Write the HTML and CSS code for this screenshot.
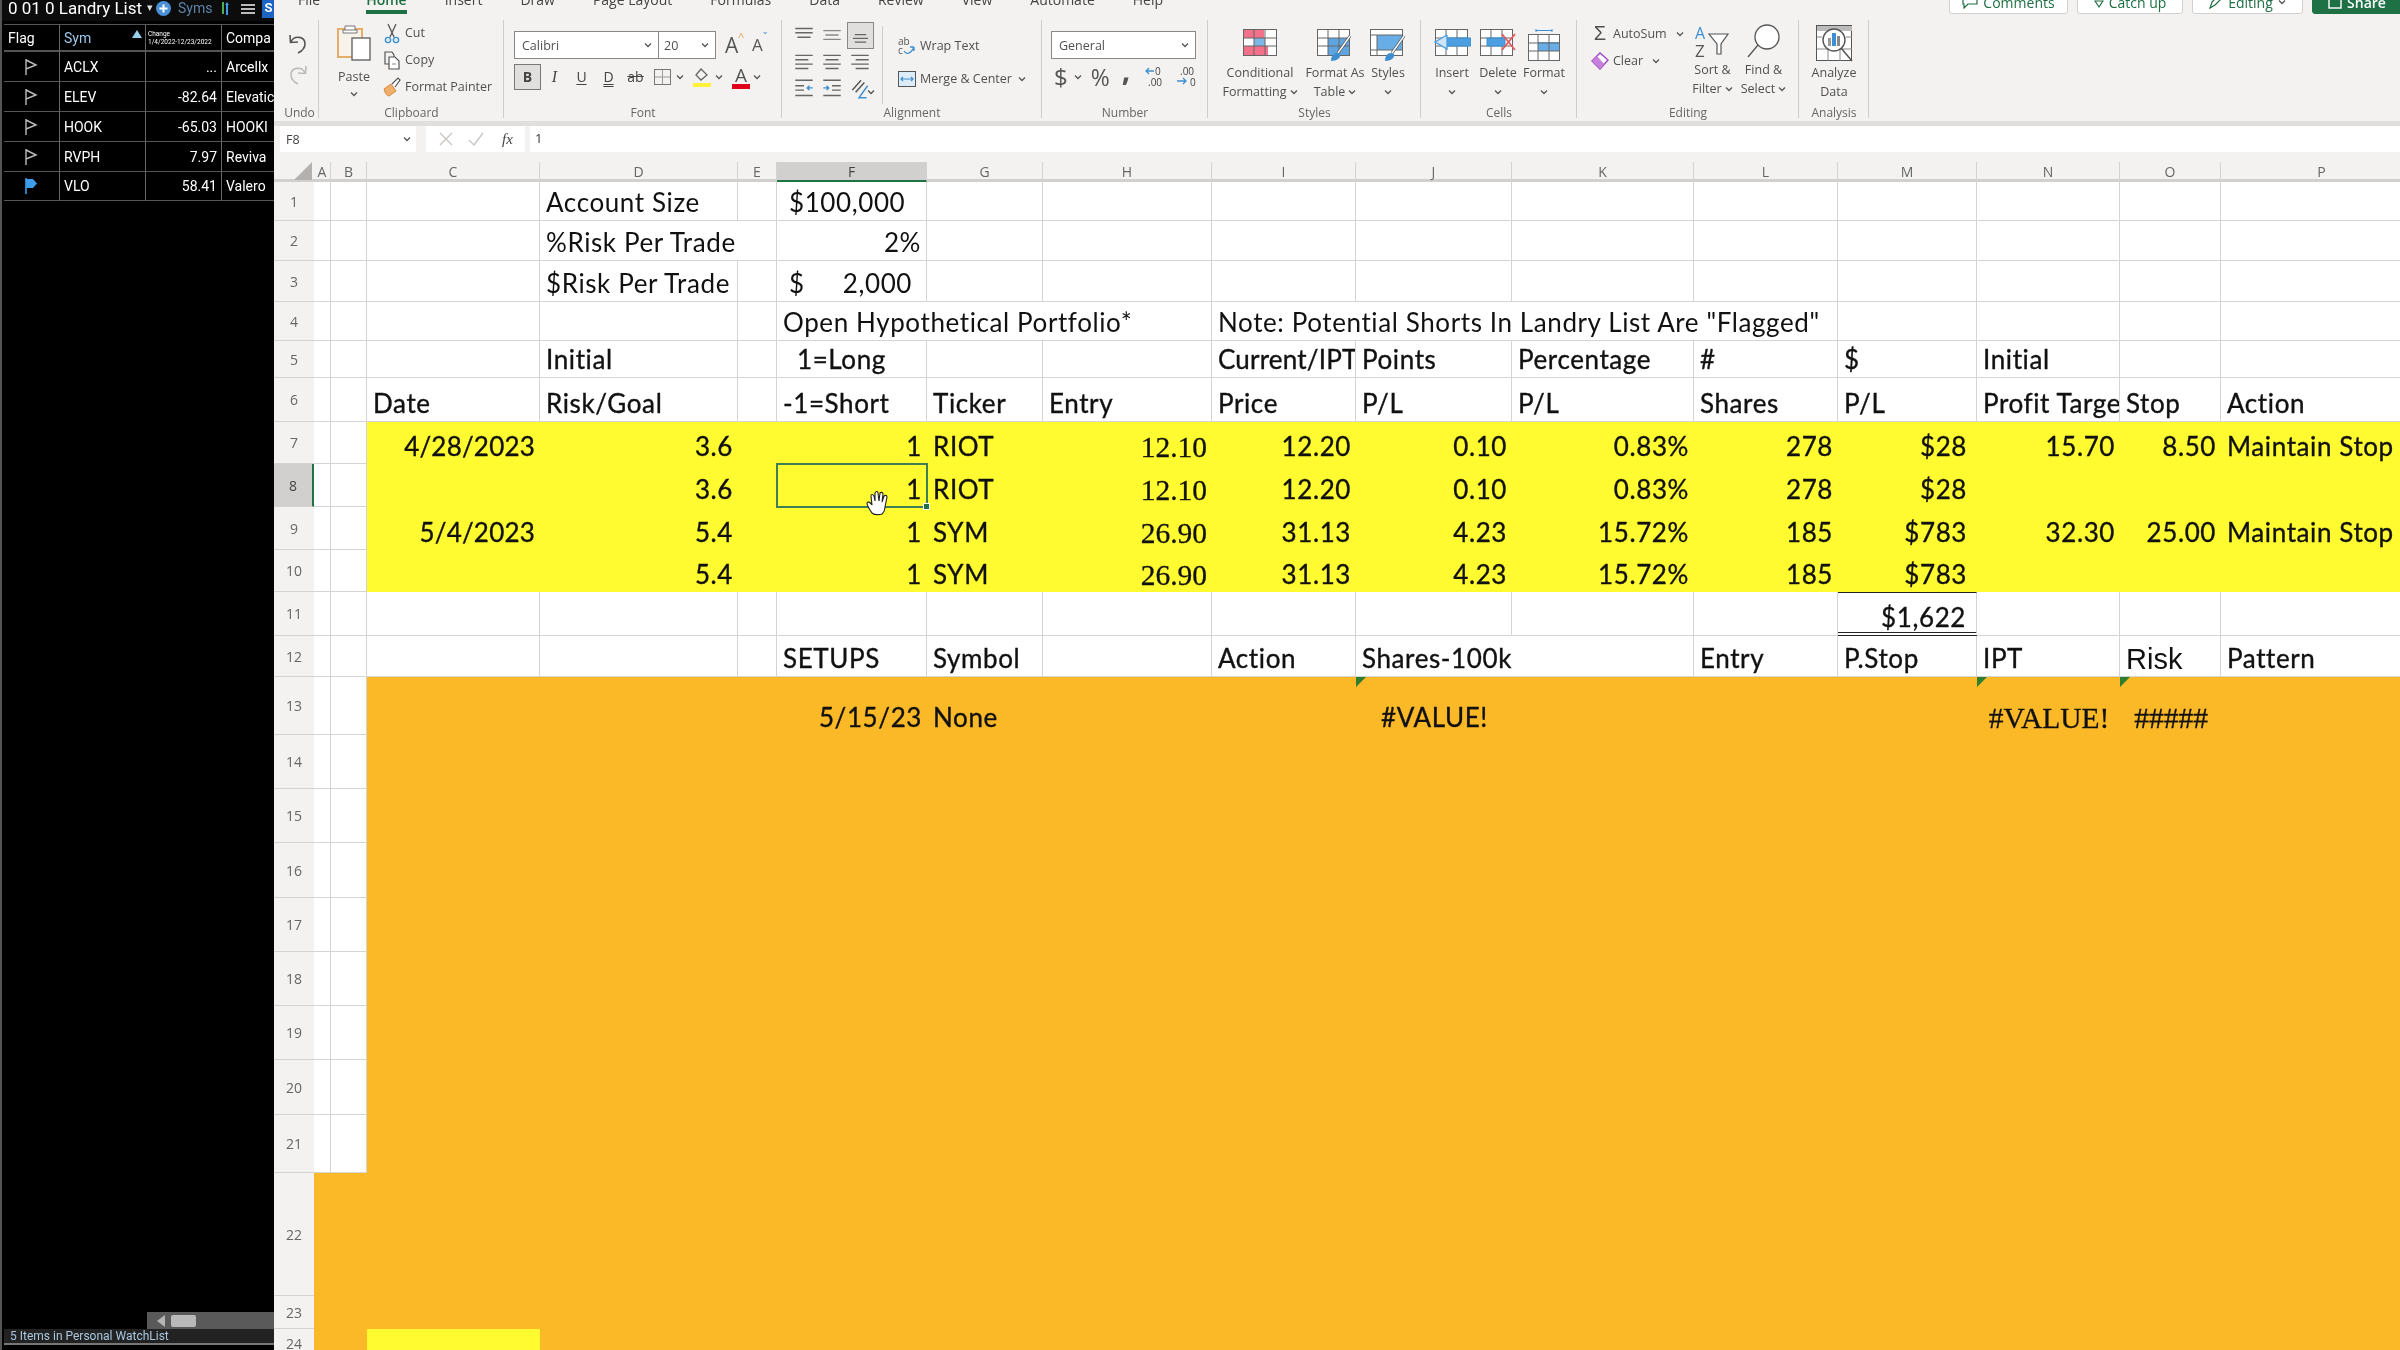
FILE: index.html
```html
<!DOCTYPE html>
<html lang="en">
<head>
<meta charset="utf-8">
<title>Landry List - Excel</title>
<link rel="stylesheet" href="styles.css">
</head>
<body>
<svg class="defs" width="0" height="0">
  <symbol id="chev" viewBox="0 0 8 6"><path d="M1 1.5 4 4.5 7 1.5" fill="none" stroke="#555" stroke-width="1.3"/></symbol>
  <symbol id="flag" viewBox="0 0 14 18"><path d="M2 1V17M2 2 12 7 2 11" fill="none" stroke="#bbb" stroke-width="1.4"/></symbol>
  <symbol id="flagon" viewBox="0 0 14 18"><path d="M2 1V17" stroke="#3d9be9" stroke-width="1.6"/><path d="M2 2H9L13 6.5 9 11H2Z" fill="#3d9be9"/></symbol>
</svg>
<div class="app">
  <aside class="side">
    <div class="side-top">
      <span class="side-title">0 01 0 Landry List</span><span class="side-caret">▾</span>
      <svg class="side-plus" width="15" height="15" viewBox="0 0 15 15"><circle cx="7.5" cy="7.5" r="7.5" fill="#4a90d9"/><path d="M7.5 3.5V11.5M3.5 7.5H11.5" stroke="#fff" stroke-width="2"/></svg>
      <span class="side-syms">Syms</span>
      <svg class="side-arrows" width="10" height="15" viewBox="0 0 10 15"><path d="M3 1V13" stroke="#4caf50" stroke-width="2"/><path d="M7 14V3" stroke="#3d9be9" stroke-width="2"/><path d="M5 4 7 1 9 4Z" fill="#3d9be9"/></svg>
      <svg class="side-menu" width="14" height="12" viewBox="0 0 14 12"><path d="M0 2H14M0 6H14M0 10H14" stroke="#bbb" stroke-width="2"/></svg>
      <span class="side-s">S</span>
    </div>
    <div class="wl">
      <div class="wl-h">Flag</div>
      <div class="wl-h wl-sym">Sym<span class="wl-sort"></span></div>
      <div class="wl-h wl-chg">Change<br>1/4/2022-12/23/2022</div>
      <div class="wl-h wl-cut">Compa</div>

      <div class="wl-c wl-f"><svg class="flag"><use href="#flag"/></svg></div><div class="wl-c">ACLX</div><div class="wl-c wl-n">...</div><div class="wl-c wl-cut">Arcellx</div>
      <div class="wl-c wl-f"><svg class="flag"><use href="#flag"/></svg></div><div class="wl-c">ELEV</div><div class="wl-c wl-n">-82.64</div><div class="wl-c wl-cut">Elevatic</div>
      <div class="wl-c wl-f"><svg class="flag"><use href="#flag"/></svg></div><div class="wl-c">HOOK</div><div class="wl-c wl-n">-65.03</div><div class="wl-c wl-cut">HOOKI</div>
      <div class="wl-c wl-f"><svg class="flag"><use href="#flag"/></svg></div><div class="wl-c">RVPH</div><div class="wl-c wl-n">7.97</div><div class="wl-c wl-cut">Reviva</div>
      <div class="wl-c wl-f"><svg class="flag"><use href="#flagon"/></svg></div><div class="wl-c">VLO</div><div class="wl-c wl-n">58.41</div><div class="wl-c wl-cut">Valero</div>
    </div>
    <div class="side-fill"></div>
    <div class="side-scroll"><span class="sc-arrow"></span><span class="sc-thumb"></span></div>
    <div class="side-status">5 Items in Personal WatchList</div>
    <div class="side-tabs"></div>
  </aside>

  <main class="main">
    <div class="tabs">
      <span class="tab t-file">File</span><span class="tab on">Home</span><span class="tab">Insert</span><span class="tab">Draw</span><span class="tab">Page Layout</span><span class="tab">Formulas</span><span class="tab">Data</span><span class="tab">Review</span><span class="tab">View</span><span class="tab">Automate</span><span class="tab">Help</span>
      <div class="acts">
        <span class="act a1"><svg width="16" height="14" viewBox="0 0 16 14"><path d="M1 1H15V9H6L2 13V9H1Z" fill="none" stroke="#1e6e42" stroke-width="1.200"/></svg>Comments</span>
        <span class="act a2"><svg width="10" height="14" viewBox="0 0 10 14"><path d="M1 6H9L5 12Z" fill="none" stroke="#1e6e42" stroke-width="1.200"/></svg>Catch up</span>
        <span class="act a3"><svg width="14" height="14" viewBox="0 0 14 14"><path d="M1 13 3 7 9 1 12 4 6 10Z" fill="none" stroke="#1e6e42" stroke-width="1.200"/></svg>Editing<svg class="chev"><use href="#chev"/></svg></span>
        <span class="act a4"><svg width="14" height="14" viewBox="0 0 14 14"><rect x="1" y="1" width="12" height="12" fill="none" stroke="#fff" stroke-width="1.400"/></svg>Share</span>
      </div>
    </div>

    <div class="ribbon">
      <section class="grp g-undo">
        <div class="gb col-c">
          <svg width="24" height="26" viewBox="0 0 24 26"><path d="M5 12C8 5 19 6 19 14 19 18 16 21 12 23M4 5 4.500 12.500 12 12" fill="none" stroke="#555" stroke-width="1.6"/></svg>
          <svg class="redo" width="24" height="26" viewBox="0 0 24 26"><path d="M19 12C16 5 5 6 5 14 5 18 8 21 12 23M20 5 19.500 12.500 12 12" fill="none" stroke="#bbb" stroke-width="1.6"/></svg>
        </div>
        <div class="gl">Undo</div>
      </section>

      <section class="grp g-clip">
        <div class="gb row-g">
          <div class="paste">
            <svg width="36" height="38" viewBox="0 0 36 38"><rect x="2" y="5" width="24" height="28" fill="#f7f3ea" stroke="#e6ad68" stroke-width="2"/><path d="M9 6V2H19V6M7 6H21V9H7Z" fill="#fff" stroke="#777"/><rect x="16" y="14" width="18" height="22" fill="#fff" stroke="#666" stroke-width="1.4"/></svg>
            <span class="pl">Paste</span>
            <svg class="chev"><use href="#chev"/></svg>
          </div>
          <div class="clist">
            <div class="ci"><svg width="18" height="22" viewBox="0 0 18 22"><path d="M5 2 11 15M13 2 7 15" stroke="#555" stroke-width="1.3"/><circle cx="5" cy="18" r="2.600" fill="none" stroke="#3d8fd1" stroke-width="1.400"/><circle cx="13" cy="18" r="2.600" fill="none" stroke="#3d8fd1" stroke-width="1.400"/></svg>Cut</div>
            <div class="ci"><svg width="18" height="22" viewBox="0 0 18 22"><path d="M9 15H2V3H9L11 6V8" fill="none" stroke="#555" stroke-width="1.200"/><path d="M6 8H12L16 12V20H6Z" fill="#fff" stroke="#555" stroke-width="1.200"/><path d="M9 15H13" stroke="#888"/></svg>Copy</div>
            <div class="ci"><svg width="18" height="22" viewBox="0 0 18 22"><path d="M1 13 8 8 13 15 6 20Q3 20 1 13Z" fill="#f0b06a" stroke="#d98a3a"/><path d="M9 8 15 2 17 4 12 11" fill="#fff" stroke="#555" stroke-width="1.200"/></svg>Format Painter</div>
          </div>
        </div>
        <div class="gl">Clipboard</div>
      </section>

      <section class="grp g-font">
        <div class="gb">
          <div class="f-row">
            <div class="dd dd-name">Calibri<svg class="chev"><use href="#chev"/></svg></div>
            <div class="dd dd-size">20<svg class="chev"><use href="#chev"/></svg></div>
            <span class="fa fa1">A<sup>^</sup></span><span class="fa fa2">A<sup>ˇ</sup></span>
          </div>
          <div class="f-row2">
            <span class="fb fb-b">B</span><span class="fb fb-i">I</span><span class="fb fb-u">U</span><span class="fb fb-d">D</span><span class="fb fb-s">ab</span>
            <svg class="fbi" width="20" height="20" viewBox="0 0 20 20"><rect x="1.500" y="2.500" width="16" height="15" fill="none" stroke="#777"/><path d="M9.500 3V17M2 10H17" stroke="#999"/></svg>
            <svg class="chev"><use href="#chev"/></svg>
            <svg class="fbi f2" width="20" height="22" viewBox="0 0 20 22"><path d="M9 3 15 9 9 14 4 9Z" fill="none" stroke="#666" stroke-width="1.300"/><rect x="1" y="17" width="18" height="4" fill="#fff238"/></svg>
            <svg class="chev"><use href="#chev"/></svg>
            <div class="fcol">A</div>
            <svg class="chev"><use href="#chev"/></svg>
          </div>
        </div>
        <div class="gl">Font</div>
      </section>

      <section class="grp g-align">
        <div class="gb row-a">
          <div class="al">
            <svg class="ab" viewBox="0 0 18 22"><path d="M1 5H17M1 9H17M3 13H15" stroke="#666" stroke-width="1.300"/></svg>
            <svg class="ab" viewBox="0 0 18 22"><path d="M1 7H17M3 11H15M1 15H17" stroke="#888" stroke-width="1.300"/></svg>
            <svg class="ab ab-on" viewBox="0 0 18 22"><path d="M3 10H15M1 14H17M3 18H15" stroke="#666" stroke-width="1.300"/></svg>
            <svg class="ab" viewBox="0 0 18 22"><path d="M1 4H17M1 8H13M1 12H17M1 16H13" stroke="#666" stroke-width="1.300"/></svg>
            <svg class="ab" viewBox="0 0 18 22"><path d="M1 4H17M3 8H15M1 12H17M3 16H15" stroke="#666" stroke-width="1.300"/></svg>
            <svg class="ab" viewBox="0 0 18 22"><path d="M1 4H17M5 8H17M1 12H17M5 16H17" stroke="#666" stroke-width="1.300"/></svg>
            <svg class="ab" viewBox="0 0 18 22"><path d="M1 3H17M1 8H9M1 12H9M1 17H17" stroke="#666" stroke-width="1.300"/><path d="M17 10H12M14 8 12 10 14 12" fill="none" stroke="#3d8fd1" stroke-width="1.300"/></svg>
            <svg class="ab" viewBox="0 0 18 22"><path d="M1 3H17M9 8H17M9 12H17M1 17H17" stroke="#666" stroke-width="1.300"/><path d="M1 10H6M4 8 6 10 4 12" fill="none" stroke="#3d8fd1" stroke-width="1.300"/></svg>
            <svg class="ab" viewBox="0 0 18 22"><path d="M2 12 10 3M5 14 13 5" stroke="#555" stroke-width="1.300"/><path d="M16 8 8 19H15" fill="none" stroke="#3d8fd1" stroke-width="1.300"/></svg>
          </div>
          <svg class="chev a-chev"><use href="#chev"/></svg>
          <div class="wm">
            <div class="wmi"><svg width="18" height="20" viewBox="0 0 18 20"><text x="0" y="9" class="wt">ab</text><text x="0" y="18" class="wt">c</text><path d="M6 15C8 19 13 18 16 11M16 11V15M16 11H12" fill="none" stroke="#3d8fd1" stroke-width="1.300"/></svg>Wrap Text</div>
            <div class="wmi"><svg width="18" height="20" viewBox="0 0 18 20"><rect x=".5" y="2.500" width="17" height="15" fill="#dcecf8" stroke="#555"/><path d="M3 10H15M5 8 3 10 5 12M13 8 15 10 13 12" fill="none" stroke="#3d8fd1" stroke-width="1.200"/></svg>Merge &amp; Center<svg class="chev"><use href="#chev"/></svg></div>
          </div>
        </div>
        <div class="gl">Alignment</div>
      </section>

      <section class="grp g-num">
        <div class="gb">
          <div class="dd dd-gen">General<svg class="chev"><use href="#chev"/></svg></div>
          <div class="n-row">
            <span class="nb nb-d">$</span><svg class="chev"><use href="#chev"/></svg><span class="nb nb-p">%</span><span class="nb nb-c">,</span>
            <svg class="nb-i" width="24" height="24" viewBox="0 0 24 24"><text x="11" y="10" class="nt">0</text><text x="4" y="21" class="nt">.00</text><path d="M10 6H2M5 3 2 6 5 9" fill="none" stroke="#3d8fd1" stroke-width="1.300"/></svg>
            <svg class="nb-i" width="24" height="24" viewBox="0 0 24 24"><text x="4" y="10" class="nt">.00</text><text x="14" y="21" class="nt">0</text><path d="M1 16H10M7 13 10 16 7 19" fill="none" stroke="#3d8fd1" stroke-width="1.300"/></svg>
          </div>
        </div>
        <div class="gl">Number</div>
      </section>

      <section class="grp g-sty">
        <div class="gb row-b">
          <div class="big b-cf">
            <div class="ic"><svg width="34" height="27" viewBox="0 0 34 27"><rect x=".5" y=".5" width="33" height="26" fill="#fff" stroke="#666"/><rect x="1" y="1" width="20" height="8" fill="#f2708a"/><rect x="11" y="9" width="11" height="8" fill="#7db8e8"/><rect x="1" y="17" width="24" height="9" fill="#f2708a"/><path d="M11 1V26M22 1V26M1 9H33M1 17H33" stroke="#666" fill="none"/></svg></div>
            <span>Conditional</span><span>Formatting<svg class="chev"><use href="#chev"/></svg></span>
          </div>
          <div class="big b-ft">
            <div class="ic"><svg width="36" height="33" viewBox="0 0 36 33"><rect x=".5" y=".5" width="32" height="26" fill="#fff" stroke="#666"/><rect x="11" y="9" width="21" height="17" fill="#5fa6e0"/><path d="M11 1V26M22 1V26M1 9H32M1 17H32" stroke="#666" fill="none"/><path d="M33 7 21 24" stroke="#555" stroke-width="3"/><path d="M33 7 21 24" stroke="#fff" stroke-width="1.400"/><path d="M14 32C14 26 18 22 23 25 24 29 20 32 14 32Z" fill="#3d8fd1"/></svg></div>
            <span>Format As</span><span>Table<svg class="chev"><use href="#chev"/></svg></span>
          </div>
          <div class="big b-st">
            <div class="ic"><svg width="36" height="33" viewBox="0 0 36 33"><rect x=".5" y=".5" width="32" height="26" fill="#fff" stroke="#666"/><rect x="7" y="6" width="25" height="15" fill="#68ade6"/><path d="M1 6H32M7 6V26M1 21H32" stroke="#666" fill="none"/><path d="M34 7 22 24" stroke="#555" stroke-width="3"/><path d="M34 7 22 24" stroke="#fff" stroke-width="1.400"/><path d="M15 32C15 26 19 22 24 25 25 29 21 32 15 32Z" fill="#3d8fd1"/></svg></div>
            <span>Styles</span><span><svg class="chev"><use href="#chev"/></svg></span>
          </div>
        </div>
        <div class="gl">Styles</div>
      </section>

      <section class="grp g-cell">
        <div class="gb row-b">
          <div class="big b-c">
            <div class="ic"><svg width="38" height="27" viewBox="0 0 38 27"><rect x="2.500" y=".5" width="32" height="26" fill="#fff" stroke="#666"/><path d="M13 1V26M24 1V26M3 9H34M3 17H34" stroke="#666" fill="none"/><rect x="10" y="9" width="28" height="8" fill="#4b9fe0" stroke="#3d8fd1"/><path d="M14 6 2 13 14 20V6" fill="#cfe4f5" stroke="#4b9fe0" stroke-width="1.400"/></svg></div>
            <span>Insert</span><span><svg class="chev"><use href="#chev"/></svg></span>
          </div>
          <div class="big b-c">
            <div class="ic"><svg width="36" height="27" viewBox="0 0 36 27"><rect x=".5" y=".5" width="32" height="26" fill="#fff" stroke="#666"/><path d="M11 1V26M22 1V26M1 9H32M1 17H32" stroke="#666" fill="none"/><rect x="7" y="9" width="18" height="8" fill="#4b9fe0" stroke="#3d8fd1"/><path d="M22 5 35 21M35 5 22 21" stroke="#e8595c" stroke-width="1.800"/></svg></div>
            <span>Delete</span><span><svg class="chev"><use href="#chev"/></svg></span>
          </div>
          <div class="big b-c">
            <div class="ic"><svg width="32" height="32" viewBox="0 0 32 32"><path d="M8 1.500H24M8 0V3M24 0V3" stroke="#3d8fd1"/><rect x=".5" y="5.500" width="31" height="26" fill="#fff" stroke="#666"/><rect x="10" y="13" width="21" height="9" fill="#68ade6"/><path d="M10 6V31M21 6V31M1 14H31M1 22H31" stroke="#666" fill="none"/></svg></div>
            <span>Format</span><span><svg class="chev"><use href="#chev"/></svg></span>
          </div>
        </div>
        <div class="gl">Cells</div>
      </section>

      <section class="grp g-edit">
        <div class="gb row-e">
          <div class="elist">
            <div class="ci"><span class="sigma">Σ</span>AutoSum<svg class="chev"><use href="#chev"/></svg></div>
            <div class="ci"><svg width="18" height="18" viewBox="0 0 18 18"><path d="M1 9 9 1 17 8 9 17Z" fill="#fff" stroke="#a24ac4" stroke-width="1.500"/><path d="M1 9 6 4 13 12 9 17Z" fill="#c77fdc"/></svg>Clear<svg class="chev"><use href="#chev"/></svg></div>
          </div>
          <div class="big b-s">
            <div class="ic ic2"><svg width="36" height="34" viewBox="0 0 36 34"><text x="0" y="15" class="az-a">A</text><text x="0" y="33" class="az-z">Z</text><path d="M14 10H33L26 20V30H22V20Z" fill="#fff" stroke="#555" stroke-width="1.200"/></svg></div>
            <span>Sort &amp;</span><span>Filter<svg class="chev"><use href="#chev"/></svg></span>
          </div>
          <div class="big b-s">
            <div class="ic ic2"><svg width="34" height="34" viewBox="0 0 34 34"><circle cx="20" cy="13" r="12" fill="#fff" stroke="#555" stroke-width="1.300"/><path d="M11 21 1 33" stroke="#555" stroke-width="1.300"/></svg></div>
            <span>Find &amp;</span><span>Select<svg class="chev"><use href="#chev"/></svg></span>
          </div>
        </div>
        <div class="gl">Editing</div>
      </section>

      <section class="grp g-an">
        <div class="gb row-b">
          <div class="big b-an">
            <div class="ic"><svg width="37" height="37" viewBox="0 0 37 37"><rect x=".5" y=".5" width="35" height="35" fill="#fff" stroke="#555"/><rect x="1" y="1" width="35" height="5" fill="#bbb"/><path d="M1 24H36M12 24V36M24 24V36M1 12H6M30 12H36" stroke="#888"/><circle cx="18" cy="15" r="11" fill="#fff" stroke="#555" stroke-width="1.400"/><rect x="12" y="13" width="3" height="8" fill="#999"/><rect x="16" y="8" width="4" height="13" fill="#3d8fd1"/><rect x="21" y="11" width="3" height="10" fill="#888"/><path d="M25 23 36 36" stroke="#555" stroke-width="1.500"/></svg></div>
            <span>Analyze</span><span>Data</span>
          </div>
        </div>
        <div class="gl">Analysis</div>
      </section>
    </div>

    <div class="fbar">
      <div class="nbox">F8<svg class="chev"><use href="#chev"/></svg></div>
      <div class="fbtns">
        <svg width="16" height="16" viewBox="0 0 16 16"><path d="M2 2 14 14M14 2 2 14" stroke="#c8c6c4" stroke-width="1.400"/></svg>
        <svg width="16" height="16" viewBox="0 0 16 16"><path d="M1 9 6 14 15 2" fill="none" stroke="#c8c6c4" stroke-width="1.400"/></svg>
        <span class="fx">fx</span>
      </div>
      <div class="finput">1</div>
    </div>

    <div class="sheet">
      <div class="ch corner"><svg width="18" height="18" viewBox="0 0 18 18"><path d="M18 0V18H0Z" fill="#b3b0ad"/></svg></div>
      <div class="ch">A</div><div class="ch">B</div><div class="ch">C</div><div class="ch">D</div><div class="ch">E</div><div class="ch ch-on">F</div><div class="ch">G</div><div class="ch">H</div><div class="ch">I</div><div class="ch">J</div><div class="ch">K</div><div class="ch">L</div><div class="ch">M</div><div class="ch">N</div><div class="ch">O</div><div class="ch">P</div>

      <div class="rh">1</div><div class="c"></div><div class="c"></div><div class="c"></div><div class="c">Account Size</div><div class="c"></div><div class="c ind">$100,000</div><div class="c"></div><div class="c"></div><div class="c"></div><div class="c"></div><div class="c"></div><div class="c"></div><div class="c"></div><div class="c"></div><div class="c"></div><div class="c"></div>

      <div class="rh">2</div><div class="c"></div><div class="c"></div><div class="c"></div><div class="c s2">%Risk Per Trade</div><div class="c r">2%</div><div class="c"></div><div class="c"></div><div class="c"></div><div class="c"></div><div class="c"></div><div class="c"></div><div class="c"></div><div class="c"></div><div class="c"></div><div class="c"></div>

      <div class="rh">3</div><div class="c"></div><div class="c"></div><div class="c"></div><div class="c">$Risk Per Trade</div><div class="c"></div><div class="c acc"><span>$</span><span>2,000</span></div><div class="c"></div><div class="c"></div><div class="c"></div><div class="c"></div><div class="c"></div><div class="c"></div><div class="c"></div><div class="c"></div><div class="c"></div><div class="c"></div>

      <div class="rh">4</div><div class="c"></div><div class="c"></div><div class="c"></div><div class="c"></div><div class="c"></div><div class="c s3">Open Hypothetical Portfolio*</div><div class="c s4">Note: Potential Shorts In Landry List Are "Flagged"</div><div class="c"></div><div class="c"></div><div class="c"></div><div class="c"></div>

      <div class="rh">5</div><div class="c"></div><div class="c"></div><div class="c"></div><div class="c hv">Initial</div><div class="c"></div><div class="c hv ind2">1=Long</div><div class="c"></div><div class="c"></div><div class="c hv clip cur">Current/IPT</div><div class="c hv">Points</div><div class="c hv">Percentage</div><div class="c hv">#</div><div class="c hv">$</div><div class="c hv">Initial</div><div class="c"></div><div class="c"></div>

      <div class="rh">6</div><div class="c"></div><div class="c"></div><div class="c hv">Date</div><div class="c hv">Risk/Goal</div><div class="c"></div><div class="c hv">-1=Short</div><div class="c hv">Ticker</div><div class="c hv">Entry</div><div class="c hv">Price</div><div class="c hv">P/L</div><div class="c hv">P/L</div><div class="c hv">Shares</div><div class="c hv">P/L</div><div class="c hv clip">Profit Target</div><div class="c hv">Stop</div><div class="c hv">Action</div>

      <div class="rh">7</div><div class="c"></div><div class="c"></div><div class="y r dt">4/28/2023</div><div class="y r">3.6</div><div class="y"></div><div class="y r">1</div><div class="y">RIOT</div><div class="y r se">12.10</div><div class="y r">12.20</div><div class="y r">0.10</div><div class="y r">0.83%</div><div class="y r">278</div><div class="y r m">$28</div><div class="y r">15.70</div><div class="y r">8.50</div><div class="y">Maintain Stop</div>

      <div class="rh rh-on">8</div><div class="c"></div><div class="c"></div><div class="y"></div><div class="y r">3.6</div><div class="y"></div><div class="y r sel">1<span class="hand"><svg width="26" height="26" viewBox="0 0 26 26"><path d="M7 23C5 20 2 16 2 13 3 11 5 12 7 15L6 6C6 4 8 4 9 6L10 11 10 3C11 1 13 1 13 3L14 11 15 3C16 2 18 2 18 4L17 12 19 6C20 5 22 5 22 7L20 17C20 20 19 22 17 24 14 25 9 25 7 23Z" fill="#fff" stroke="#222" stroke-width="1.100"/></svg></span></div><div class="y">RIOT</div><div class="y r se">12.10</div><div class="y r">12.20</div><div class="y r">0.10</div><div class="y r">0.83%</div><div class="y r">278</div><div class="y r m">$28</div><div class="y"></div><div class="y"></div><div class="y"></div>

      <div class="rh">9</div><div class="c"></div><div class="c"></div><div class="y r dt">5/4/2023</div><div class="y r">5.4</div><div class="y"></div><div class="y r">1</div><div class="y">SYM</div><div class="y r se">26.90</div><div class="y r">31.13</div><div class="y r">4.23</div><div class="y r">15.72%</div><div class="y r">185</div><div class="y r m">$783</div><div class="y r">32.30</div><div class="y r">25.00</div><div class="y">Maintain Stop</div>

      <div class="rh">10</div><div class="c"></div><div class="c"></div><div class="y"></div><div class="y r">5.4</div><div class="y"></div><div class="y r">1</div><div class="y">SYM</div><div class="y r se">26.90</div><div class="y r">31.13</div><div class="y r">4.23</div><div class="y r">15.72%</div><div class="y r">185</div><div class="y r m">$783</div><div class="y"></div><div class="y"></div><div class="y"></div>

      <div class="rh">11</div><div class="c"></div><div class="c"></div><div class="c"></div><div class="c"></div><div class="c"></div><div class="c"></div><div class="c"></div><div class="c"></div><div class="c"></div><div class="c"></div><div class="c"></div><div class="c"></div><div class="c r hv m tot">$1,622</div><div class="c"></div><div class="c"></div><div class="c"></div>

      <div class="rh">12</div><div class="c"></div><div class="c"></div><div class="c"></div><div class="c"></div><div class="c"></div><div class="c hv">SETUPS</div><div class="c hv">Symbol</div><div class="c"></div><div class="c hv">Action</div><div class="c hv s2">Shares-100k</div><div class="c hv">Entry</div><div class="c hv">P.Stop</div><div class="c hv">IPT</div><div class="c ar">Risk</div><div class="c hv">Pattern</div>

      <div class="rh">13</div><div class="c"></div><div class="c"></div><div class="o s3"></div><div class="o r hv">5/15/23</div><div class="o hv">None</div><div class="o s2"></div><div class="o ctr hv tri">#VALUE!</div><div class="o s3"></div><div class="o ctr se se2 tri">#VALUE!</div><div class="o ctr se se2 tri">#####</div><div class="o"></div>

      <div class="rh">14</div><div class="c"></div><div class="c"></div><div class="o s14"></div>
      <div class="rh">15</div><div class="c"></div><div class="c"></div><div class="o s14"></div>
      <div class="rh">16</div><div class="c"></div><div class="c"></div><div class="o s14"></div>
      <div class="rh">17</div><div class="c"></div><div class="c"></div><div class="o s14"></div>
      <div class="rh">18</div><div class="c"></div><div class="c"></div><div class="o s14"></div>
      <div class="rh">19</div><div class="c"></div><div class="c"></div><div class="o s14"></div>
      <div class="rh">20</div><div class="c"></div><div class="c"></div><div class="o s14"></div>
      <div class="rh">21</div><div class="c"></div><div class="c"></div><div class="o s14"></div>
      <div class="rh">22</div><div class="o s16"></div>
      <div class="rh">23</div><div class="o s16"></div>
      <div class="rh">24</div><div class="o s2"></div><div class="y"></div><div class="o s13"></div>
    </div>
  </main>
</div>
</body>
</html>
```

FILE: styles.css
```css
* { box-sizing: border-box; }
html, body { margin: 0; padding: 0; background: #fff; }
body { width: 2400px; height: 1350px; overflow: hidden; font-family: "Open Sans", "Liberation Sans", sans-serif; }
.defs { display: block; height: 0; }
.app { display: flex; width: 2400px; height: 1350px; overflow: hidden; filter: blur(.4px); }

/* watch list */
.side { width: 274px; flex: none; background: #000; color: #eee; display: flex; flex-direction: column; border-left: 2px solid #555; font-family: Roboto, "Liberation Sans", sans-serif; }
.side-top { height: 21px; display: flex; align-items: flex-start; padding: 0 0 0 6px; background: #0c0c0c; overflow: hidden; }
.side-title { font-size: 17px; line-height: 17px; white-space: nowrap; color: #fff; }
.side-caret { font-size: 11px; line-height: 16px; margin-left: 5px; color: #ddd; }
.side-plus { margin: 1px 0 0 3px; flex: none; }
.side-syms { font-size: 14px; line-height: 16px; color: #5f83a8; margin-left: 7px; }
.side-arrows { margin: 1px 0 0 7px; flex: none; }
.side-menu { margin: 3px 0 0 11px; flex: none; }
.side-s { margin-left: 7px; width: 14px; height: 18px; background: #1d63c4; color: #fff; font-size: 13px; font-weight: 700; text-align: center; line-height: 16px; flex: none; }
.wl { margin: 3px 0 0 2px; display: grid; grid-template-columns: 56px 86px 76px 52px; grid-template-rows: 27px repeat(5, 30px); }
.wl-h, .wl-c { border-top: 1px solid #555; border-right: 1px solid #666; display: flex; align-items: center; padding: 0 4px; font-size: 14px; color: #fff; white-space: nowrap; overflow: hidden; }
.wl-c:nth-child(4n+4), .wl-h:nth-child(4) { border-right: 0; padding-right: 0; }
.wl-c:nth-last-child(-n+4) { border-bottom: 1px solid #555; }
.wl-h { border-bottom: 1px solid #555; position: relative; }
.wl-sym { color: #9cc7ea; }
.wl-sort { position: absolute; right: 3px; top: 5px; width: 0; height: 0; border-left: 5px solid transparent; border-right: 5px solid transparent; border-bottom: 8px solid #9bcdec; }
.wl-chg { display: block; font-size: 6.500px; line-height: 8px; padding: 5px 0 0 2px; }
.wl-n { justify-content: flex-end; }
.wl-f { justify-content: center; padding-right: 6px; }
.flag { width: 14px; height: 18px; }
.side-fill { flex: 1; }
.side-scroll { height: 17px; margin-left: 145px; background: #5a5a5a; display: flex; align-items: center; padding-left: 10px; gap: 6px; }
.sc-arrow { width: 0; height: 0; border-top: 6px solid transparent; border-bottom: 6px solid transparent; border-right: 8px solid #b5b5b5; }
.sc-thumb { width: 25px; height: 12px; background: #b9b9b9; border-radius: 2px; }
.side-status { height: 14px; margin-left: 2px; background: #222; color: #a9c7de; font-size: 12px; line-height: 14px; padding-left: 6px; white-space: nowrap; }
.side-tabs { height: 7px; margin-left: 2px; background: #000; border-top: 2px solid #777; }

/* main column */
.main { flex: 1; min-width: 0; display: flex; flex-direction: column; background: #f3f2f1; }
.tabs { height: 14px; flex: none; display: flex; gap: 38px; padding-left: 24px; overflow: hidden; font-size: 14px; color: #444; }
.tab { position: relative; height: 21px; margin-top: -7px; line-height: 14px; white-space: nowrap; }
.t-file { margin-right: 8px; }
.tab.on { color: #1e6e42; font-weight: 600; }
.tab.on::after { content: ""; position: absolute; left: 0; right: 0; bottom: 0; height: 4px; background: #1e7145; }
.acts { margin-left: auto; display: flex; gap: 9px; }
.act { height: 24px; margin-top: -10px; background: #fff; border: 1px solid #d2d0ce; border-radius: 3px; display: flex; justify-content: center; align-items: center; gap: 5px; color: #1e6e42; font-size: 14px; }
.a1 { width: 119px; }
.a2 { width: 106px; }
.a3 { width: 111px; }
.a4 { width: 100px; margin-right: -12px; background: #1e7145; color: #fff; font-weight: 600; border-color: #1e7145; padding-right: 10px; }

/* ribbon */
.ribbon { height: 107px; flex: none; display: flex; padding: 0 0 0 6px; font-size: 12.500px; color: #505050; }
.grp { position: relative; display: flex; flex-direction: column; height: 107px; padding-top: 6px; }
.grp::after { content: ""; position: absolute; right: 0; top: 6px; bottom: 3px; width: 1px; background: #cfcdcb; }
.gb { height: 84px; }
.gl { height: 17px; line-height: 17px; text-align: center; font-size: 12px; color: #666; white-space: nowrap; }
.g-undo { width: 39px; }
.g-clip { width: 185px; }
.g-font { width: 278px; }
.g-align { width: 260px; }
.g-num { width: 166px; }
.g-sty { width: 213px; }
.g-cell { width: 156px; }
.g-edit { width: 222px; }
.g-an { width: 70px; }
.chev { width: 8px; height: 6px; flex: none; }

.col-c { display: flex; flex-direction: column; align-items: center; gap: 5px; padding: 10px 4px 0 0; }
.row-g { display: flex; padding: 4px 0 0 17px; gap: 11px; }
.paste { width: 36px; display: flex; flex-direction: column; align-items: center; }
.pl { line-height: 19px; margin-top: 5px; white-space: nowrap; }
.paste .chev { margin-top: 5px; }
.clist { display: flex; flex-direction: column; gap: 4px; margin-top: -3px; }
.ci { height: 23px; display: flex; align-items: center; gap: 4px; white-space: nowrap; }
.ci .chev { margin-left: 5px; }

.f-row { display: flex; align-items: center; padding: 11px 0 0 10px; }
.dd { height: 28px; background: #fff; border: 1px solid #8a8886; display: flex; align-items: center; justify-content: space-between; padding: 0 6px 0 7px; }
.dd-name { width: 145px; }
.dd-size { width: 58px; margin-left: -1px; padding-left: 5px; }
.fa { font-size: 21px; line-height: 28px; color: #555; position: relative; }
.fa sup { font-size: 11px; position: absolute; top: -4px; left: 13px; line-height: 20px; color: #e0a050; }
.fa1 { margin-left: 9px; width: 27px; }
.fa2 { font-size: 17px; width: 20px; }
.fa2 sup { color: #4a90d9; left: 11px; }
.f-row2 { display: flex; align-items: center; padding: 5px 0 0 10px; height: 31px; }
.fb { width: 27px; text-align: center; font-size: 14px; color: #444; line-height: 26px; flex: none; }
.fb-b { background: #e1dfdd; border: 1px solid #7a7876; font-weight: 700; line-height: 24px; height: 26px; }
.fb-i { font-style: italic; font-family: "Liberation Serif", serif; font-size: 16px; }
.fb-u { text-decoration: underline; text-underline-offset: 2px; }
.fb-d { text-decoration: underline double; text-underline-offset: 2px; }
.fb-s { text-decoration: line-through; }
.fbi { margin-left: 4px; flex: none; }
.f-row2 > .chev { margin-left: 3px; }
.f2 { margin-left: 8px; }
.fcol { width: 18px; height: 23px; margin-left: 9px; font-size: 19px; line-height: 19px; text-align: center; color: #555; border-bottom: 5px solid #e0001b; flex: none; }

.row-a { display: flex; padding: 1px 0 0 8px; }
.al { display: grid; grid-template-columns: repeat(3, 28px); grid-template-rows: 28px 27px 26px; justify-items: center; align-items: center; width: 84px; }
.ab { width: 20px; height: 24px; }
.ab-on { width: 27px; height: 27px; padding: 1px 4px; background: #e1dfdd; border: 1px solid #8a8886; }
.a-chev { align-self: flex-end; margin: 0 0 9px -7px; }
.wm { margin-left: 7px; padding: 8px 0 0 15px; border-left: 1px solid #cfcdcb; height: 78px; margin-top: 5px; display: flex; flex-direction: column; gap: 10px; }
.wmi { display: flex; align-items: center; gap: 4px; height: 23px; white-space: nowrap; }
.wmi .chev { margin-left: 2px; }
.wt { font: 10px "Open Sans", sans-serif; fill: #555; }

.dd-gen { width: 145px; margin: 11px 0 0 9px; justify-content: space-between; }
.n-row { display: flex; align-items: center; gap: 6px; padding: 4px 0 0 12px; height: 32px; }
.nb { color: #555; flex: none; }
.nb-d { font-size: 24px; line-height: 28px; }
.nb-p { font-size: 23px; line-height: 28px; margin-left: 3px; }
.nb-c { font-size: 30px; font-weight: 700; line-height: 14px; margin-left: 6px; width: 14px; height: 28px; }
.nb-i { flex: none; margin-left: 2px; }
.nt { font: 10px "Open Sans", sans-serif; fill: #444; }

.row-b { display: flex; padding: 4px 0 0 0; }
.big { display: flex; flex-direction: column; align-items: center; white-space: nowrap; }
.big > span { height: 19px; line-height: 19px; display: flex; align-items: center; gap: 3px; }
.ic { height: 39px; display: flex; align-items: flex-start; padding-top: 5px; }
.ic2 { height: 36px; padding-top: 0; }
.g-sty .row-b { padding-left: 10px; }
.b-cf { width: 84px; }
.b-ft { width: 66px; }
.b-st { width: 40px; }
.g-cell .row-b { padding-left: 8px; }
.b-c { width: 46px; }
.row-e { display: flex; padding: 4px 0 0 14px; }
.elist { width: 96px; display: flex; flex-direction: column; gap: 4px; margin-top: -2px; }
.sigma { font-size: 20px; width: 18px; text-align: center; font-family: "Liberation Sans", sans-serif; }
.b-s { width: 51px; }
.az-a { font: 16px "Open Sans", sans-serif; fill: #3d8fd1; }
.az-z { font: 17px "Open Sans", sans-serif; fill: #555; }
.g-an .row-b { padding-left: 17px; }
.b-an { width: 36px; }
.b-an .ic { padding-top: 1px; height: 39px; }

/* formula bar */
.fbar { flex: none; box-sizing: content-box; height: 26px; padding: 0 0 10px 6px; display: flex; gap: 10px; border-top: 5px solid #e1dfdd; background: #f3f2f1; }
.nbox { width: 136px; height: 26px; background: #fff; display: flex; align-items: center; justify-content: space-between; padding: 0 5px 0 6px; font-size: 12.500px; color: #444; }
.fbtns { width: 99px; height: 26px; background: #fff; display: flex; align-items: center; padding-left: 12px; gap: 14px; color: #444; }
.fx { font: italic 15px "Liberation Serif", serif; margin-left: 4px; }
.finput { flex: 1; height: 26px; margin-left: -5px; background: #fff; font-size: 13px; line-height: 24px; padding-left: 5px; color: #333; }

/* sheet */
.sheet { flex: 1; background: #fff; display: grid; min-height: 0; overflow: hidden;
  grid-template-columns: 40px 17px 36px 173px 198px 39px 150px 116px 169px 144px 156px 182px 144px 139px 143px 101px 202px;
  grid-template-rows: 20px 39px 40px 41px 39px 37px 44px 42px 43px 43px 42px 44px 41px 58px 54px 54px 55px 54px 54px 54px 55px 58px 123px 33px 30px; }
.ch { background: #f3f2f1; border-right: 1px solid #d4d2d0; border-bottom: 3px solid #d2d0ce; text-align: center; font-size: 14px; line-height: 19px; color: #666; }
.corner { display: flex; justify-content: flex-end; padding: 0 2px 0 0; border-right: 0; }
.ch-on { background: #d2d0ce; border-bottom: 2px solid #217346; color: #444; }
.rh { background: #f3f2f1; border-bottom: 1px solid #d4d2d0; display: flex; align-items: center; justify-content: center; font-size: 14px; color: #666; }
.rh-on { background: #d2d0ce; border-right: 2px solid #217346; color: #444; }
.c, .y, .o { display: flex; align-items: flex-end; justify-content: flex-start; padding: 0 5px 6px 6px; font: 26px/24px Lato, Carlito, "Liberation Sans", sans-serif; letter-spacing: .6px; color: #111; white-space: nowrap; min-width: 0; }
.c { border-right: 1px solid #d4d4d4; border-bottom: 1px solid #d4d4d4; }
.y { background: #fffb30; -webkit-text-stroke: .35px #111; }
.o { background: #fcb927; }
.r { justify-content: flex-end; }
.ctr { justify-content: center; }
.hv { -webkit-text-stroke: .35px #111; }
.clip { overflow: hidden; }
.cur { letter-spacing: .2px; }
.dt { letter-spacing: .2px; }
.m { padding-right: 10px; }
.ind { padding-left: 12px; }
.ind2 { padding-left: 20px; }
.acc { justify-content: space-between; padding: 0 14px 6px 12px; }
.s2 { grid-column: span 2; }
.s3 { grid-column: span 3; }
.s4 { grid-column: span 4; }
.s13 { grid-column: span 13; }
.s14 { grid-column: span 14; }
.s16 { grid-column: span 16; }
.se { font: 29.500px/24px "Liberation Serif", serif; letter-spacing: 0; padding-bottom: 5px; -webkit-text-stroke: .3px #111; }
.se2 { padding-bottom: 5px; }
.ar { font: 29px/24px "Liberation Sans", sans-serif; letter-spacing: 0; padding-bottom: 5px; }
.tot { border-top: 1px solid #222; border-bottom: 4px double #222; padding-bottom: 3px; }
.tri { position: relative; }
.tri::before { content: ""; position: absolute; left: 0; top: 0; border-top: 10px solid #2f7d2f; border-right: 10px solid transparent; }
.sel { position: relative; }
.sel::after { content: ""; position: absolute; left: -1px; right: -1px; top: -1px; bottom: -1px; border: 2px solid #3f7f56; }
.sel::before { content: ""; position: absolute; right: -3px; bottom: -3px; width: 5px; height: 5px; background: #217346; border: 1px solid #fff; z-index: 1; }
.hand { position: absolute; left: 88px; top: 26px; width: 26px; height: 26px; z-index: 2; }
```
